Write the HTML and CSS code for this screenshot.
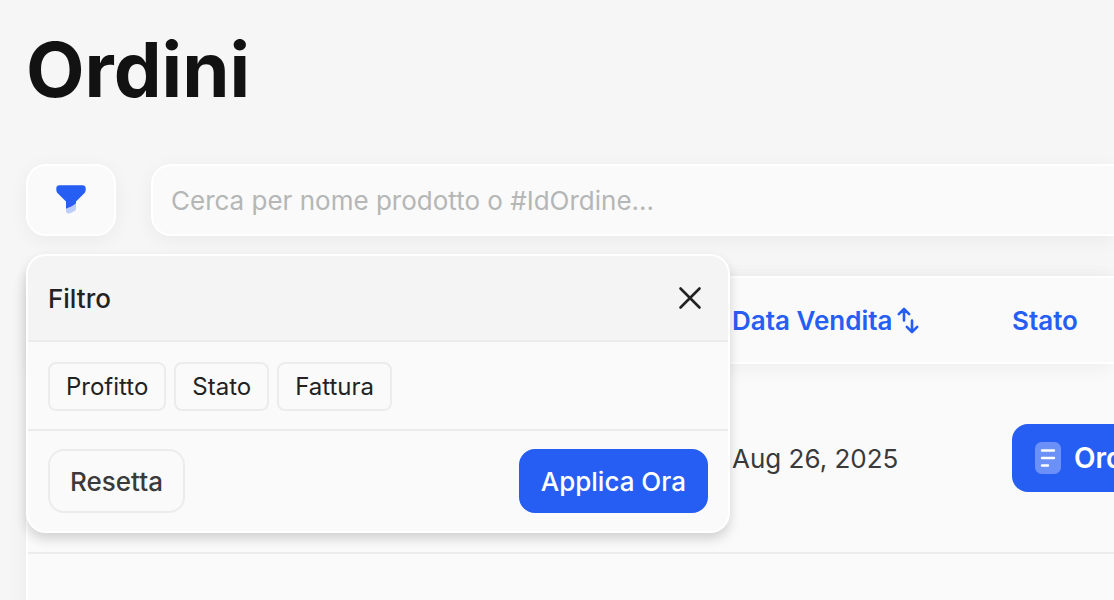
FILE: index.html
```html
<!DOCTYPE html>
<html lang="it">

<head>
    <meta charset="UTF-8">
    <meta name="viewport" content="width=device-width, initial-scale=1.0">
    <title>Ordini</title>
    <link rel="stylesheet" href="styles.css">
</head>

<body>
    <main class="page">
        <h1>Ordini</h1>

        <div class="toolbar">
            <div class="filter">
                <button type="button" class="filter-toggle" id="filter-toggle" aria-label="Filtro" aria-expanded="true">
                    <svg width="32" height="32" viewBox="0 0 32 32" aria-hidden="true">
                        <path fill="#bccdfb" d="M11 23.500 21 18v6.500c0 1-.5 1.900-1.400 2.500-1.700 1.200-3.500 2.100-5.400 2.500-1.700.3-3.200-.6-3.200-2.200z" />
                        <path fill="#265df2" d="M4.500 1.300h23c1.800 0 3.200 1.200 3.200 2.900v1.200c0 1.700-.7 3.200-1.900 4.400L21 17.500v1.800c-2.900 2.600-6.300 4-10 5.400v-7.200L3.200 9.800C2 8.600 1.300 7.100 1.300 5.400V4.200c0-1.700 1.400-2.900 3.200-2.900z" />
                    </svg>
                </button>

                <!-- Menu filtro -->
                <section class="filter-menu" id="filter-menu">
                    <header class="filter-head">
                        <h2>Filtro</h2>
                        <button type="button" class="close" id="filter-close" aria-label="Chiudi">
                            <svg width="24" height="24" viewBox="0 0 24 24" aria-hidden="true">
                                <path fill="none" stroke="#222" stroke-width="2.600" stroke-linecap="round" d="M2.500 2.500l19 19M21.500 2.500l-19 19" />
                            </svg>
                        </button>
                    </header>
                    <div class="chips">
                        <button type="button" class="chip">Profitto</button>
                        <button type="button" class="chip">Stato</button>
                        <button type="button" class="chip">Fattura</button>
                    </div>
                    <footer class="filter-actions">
                        <button type="button" class="btn btn-reset">Resetta</button>
                        <button type="button" class="btn btn-apply">Applica Ora</button>
                    </footer>
                </section>
            </div>
            <input type="search" class="search" aria-label="Cerca ordini" placeholder="Cerca per nome prodotto o #IdOrdine...">
        </div>

        <div class="orders">
            <table>
                <colgroup>
                    <col class="col-product">
                    <col class="col-date">
                    <col>
                </colgroup>
                <thead>
                    <tr>
                        <th></th>
                        <th>
                            <button type="button" class="sort">Data Vendita
                                <svg width="24" height="28" viewBox="0 0 24 28" aria-hidden="true">
                                    <path fill="none" stroke="#265df2" stroke-width="2.600" stroke-linecap="round" stroke-linejoin="round" d="M8 14.500V3M2.800 8.200L8 3l5.200 5.200M16 14.500V26M10.800 20.800L16 26l5.200-5.200" />
                                </svg>
                            </button>
                        </th>
                        <th>Stato</th>
                    </tr>
                </thead>
                <tbody>
                    <tr>
                        <td></td>
                        <td>Aug 26, 2025</td>
                        <td>
                            <button type="button" class="status">
                                <svg width="28" height="34" viewBox="0 0 28 34" aria-hidden="true">
                                    <rect x="1" y="1" width="26" height="32" rx="6.500" fill="#6b90f7" />
                                    <path fill="none" stroke="#fff" stroke-width="2.400" stroke-linecap="round" d="M8 9.500h12M8 17h12M8 24.500h6" />
                                </svg>
                                Ordine
                            </button>
                        </td>
                    </tr>
                    <tr>
                        <td></td>
                        <td></td>
                        <td></td>
                    </tr>
                </tbody>
            </table>
        </div>
    </main>

    <script>
        const filterMenu = document.getElementById('filter-menu');
        const filterToggle = document.getElementById('filter-toggle');
        const filterClose = document.getElementById('filter-close');

        // apre o chiude il menu
        function setMenu(open) {
            filterMenu.hidden = !open;
            filterToggle.setAttribute('aria-expanded', open);
        }

        filterToggle.addEventListener('click', () => setMenu(filterMenu.hidden));
        filterClose.addEventListener('click', () => setMenu(false));
    </script>
</body>

</html>
```
FILE: styles.css
```css
* {
    box-sizing: border-box;
}

body {
    margin: 0;
    background-color: #f6f6f6;
    font-family: Inter, "Liberation Sans", sans-serif;
    font-size: 26px;
    color: #3a3a3a;
    overflow: hidden;
}

button,
input {
    font: inherit;
    color: inherit;
}

button {
    padding: 0;
    border: none;
    background: none;
    cursor: pointer;
}

svg {
    display: block;
    flex: none;
}

.page {
    padding: 21px 0 0 26px;
}

h1 {
    margin: 0 0 47px;
    font-size: 76px;
    line-height: 96px;
    font-weight: 700;
    color: #121212;
}

.toolbar {
    display: flex;
    gap: 35px;
}

.filter {
    position: relative;
}

.filter-toggle {
    display: flex;
    align-items: center;
    justify-content: center;
    width: 90px;
    height: 72px;
    border: 2px solid #fff;
    border-radius: 20px;
    background-color: #fafafa;
    box-shadow: 0 4px 20px rgba(0, 0, 0, 0.05);
}

.search {
    flex: 1;
    min-width: 0;
    height: 72px;
    padding: 0 18px;
    border: 2px solid #fff;
    border-right: none;
    border-radius: 20px 0 0 20px;
    background-color: #fafafa;
    box-shadow: 0 4px 20px rgba(0, 0, 0, 0.05);
    outline: none;
    appearance: none;
}

.search::placeholder {
    color: #b5b6b6;
}

.filter-menu {
    position: absolute;
    top: 90px;
    left: 0;
    z-index: 10;
    width: 704px;
    border: 2px solid #fff;
    border-radius: 20px;
    background-color: #fafafa;
    box-shadow: 0 6px 12px rgba(0, 0, 0, 0.16);
    overflow: hidden;
}

.filter-menu[hidden] {
    display: none;
}

.filter-head {
    display: flex;
    align-items: center;
    justify-content: space-between;
    height: 86px;
    padding: 0 26px 0 20px;
    border-bottom: 2px solid #ececec;
    background-color: #f4f4f4;
}

.filter-head h2 {
    margin: 0;
    font-size: 26px;
    font-weight: 500;
    color: #222;
}

.chips {
    display: flex;
    gap: 8px;
    padding: 20px 20px 18px;
    border-bottom: 2px solid #ececec;
}

.chip {
    height: 49px;
    padding: 0 16px;
    border: 2px solid #ececec;
    border-radius: 8px;
    font-size: 24px;
    color: #222;
}

.filter-actions {
    display: flex;
    justify-content: space-between;
    padding: 18px 20px;
}

.btn {
    height: 64px;
    padding: 0 20px;
    border: 2px solid #ececec;
    border-radius: 16px;
    font-weight: 500;
}

.btn-apply {
    border-color: #265df2;
    background-color: #265df2;
    color: #fff;
}

.orders {
    margin-top: 40px;
    border-left: 2px solid #fff;
    background-color: #fafafa;
    box-shadow: 0 4px 20px rgba(0, 0, 0, 0.05);
}

table {
    width: 100%;
    table-layout: fixed;
    border-collapse: separate;
    border-spacing: 0;
}

.col-product {
    width: 704px;
}

.col-date {
    width: 280px;
}

th,
td {
    padding: 0;
    text-align: left;
    white-space: nowrap;
}

thead tr {
    box-shadow: 0 4px 20px rgba(0, 0, 0, 0.05);
}

th {
    height: 88px;
    border-top: 2px solid #fff;
    border-bottom: 2px solid #fff;
    font-weight: 600;
    color: #265df2;
}

.sort {
    display: flex;
    align-items: center;
    gap: 4px;
}

td {
    height: 190px;
    border-bottom: 2px solid #ececec;
}

.status {
    display: flex;
    align-items: center;
    gap: 12px;
    height: 68px;
    padding: 0 22px;
    border-radius: 16px;
    background-color: #265df2;
    font-size: 28px;
    font-weight: 600;
    color: #fff;
}
```
